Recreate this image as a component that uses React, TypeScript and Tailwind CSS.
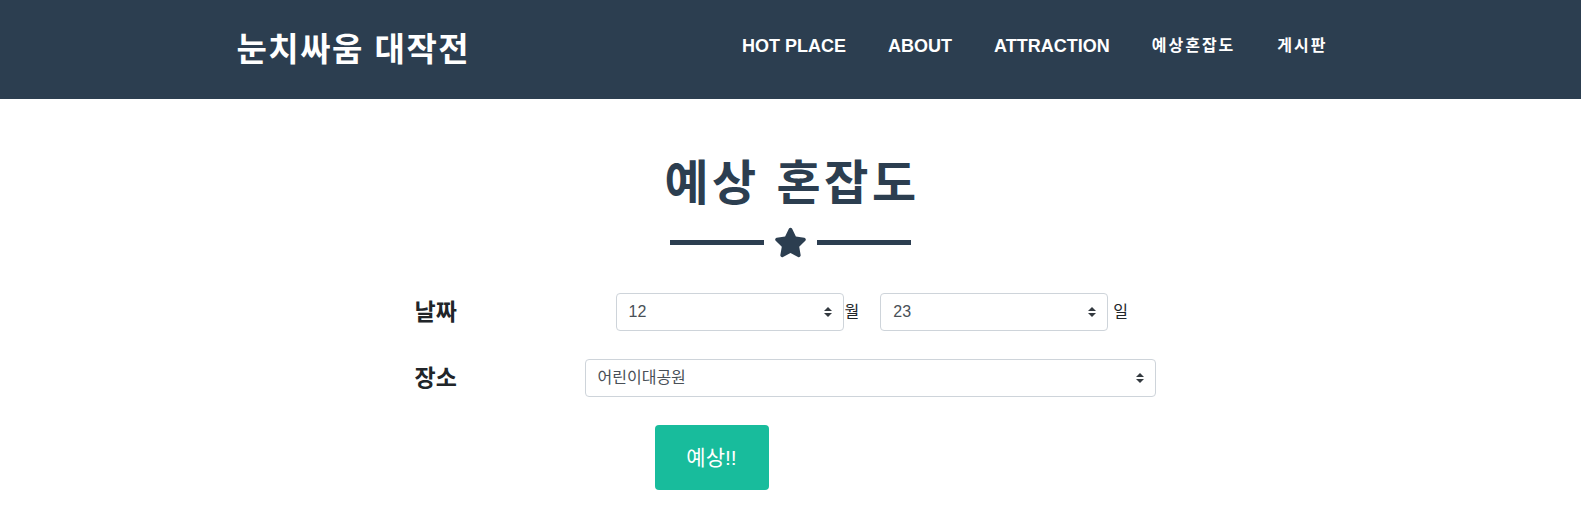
import React from "react";
import { FaStar } from "react-icons/fa";

const font = "font-['Liberation_Sans','Noto_Sans_CJK_KR',sans-serif]";

function SelectBox({ value, width }: { value: string; width: string }) {
  return (
    <div className={`relative ${width}`}>
      <select
        defaultValue={value}
        className={`appearance-none w-full h-[38px] border border-[#ced4da] rounded-[4px] pl-[12px] pr-[28px] text-[16px] text-[#495057] bg-white outline-none ${font}`}
      >
        <option>{value}</option>
      </select>
      <svg
        className="absolute right-[12px] top-1/2 -translate-y-1/2 pointer-events-none"
        width="8"
        height="10"
        viewBox="0 0 4 5"
      >
        <path fill="#343a40" d="M2 0L0 2h4zm0 5L0 3h4z" />
      </svg>
    </div>
  );
}

export default function App() {
  const navItems = ["HOT PLACE", "ABOUT", "ATTRACTION"];
  const navKo = ["예상혼잡도", "게시판"];
  return (
    <div className={`min-h-screen bg-white ${font}`}>
      <nav className="h-[99px] bg-[#2c3e50]">
        <div className="w-[1170px] mx-auto px-[15px] h-full flex items-center">
          <a className="pl-[16px] text-[33px] font-bold text-white leading-none tracking-[1.5px]">
            눈치싸움 대작전
          </a>
          <ul className="ml-auto mr-[15px] flex items-center -mt-[8px]">
            {navItems.map((t) => (
              <li key={t} className="px-[21px] text-[18px] font-bold text-white leading-none">
                {t}
              </li>
            ))}
            {navKo.map((t) => (
              <li
                key={t}
                className="px-[21px] text-[16px] font-bold text-white tracking-[2px] leading-none last:pr-[18px]"
              >
                {t}
              </li>
            ))}
          </ul>
        </div>
      </nav>

      <section className="pt-[61px]">
        <h2 className="text-center text-[48px] font-bold text-[#2c3e50] leading-none tracking-[3.5px] pl-[3px]">
          예상 혼잡도
        </h2>
        <div className="flex justify-center items-center mt-[19px] h-[31px]">
          <div className="w-[94px] h-[5px] bg-[#2c3e50]" />
          <FaStar className="mx-[10px] w-[33px] h-[31px] text-[#2c3e50]" />
          <div className="w-[94px] h-[5px] bg-[#2c3e50]" />
        </div>

        <div className="w-[752px] mx-auto mt-[35px]">
          <div className="flex items-center h-[38px]">
            <div className="w-[201px] text-[23px] font-bold text-[#212529]">날짜</div>
            <SelectBox value="12" width="w-[228px]" />
            <span className="ml-[1px] text-[16px] text-[#212529]">월</span>
            <div className="ml-[21px]">
              <SelectBox value="23" width="w-[228px]" />
            </div>
            <span className="ml-[5px] text-[16px] text-[#212529]">일</span>
          </div>

          <div className="flex items-center h-[38px] mt-[28px]">
            <div className="w-[170px] text-[23px] font-bold text-[#212529]">장소</div>
            <SelectBox value="어린이대공원" width="w-[571px]" />
          </div>

          <button className="mt-[28px] ml-[240px] w-[114px] h-[65px] rounded-[4px] bg-[#18bc9c] text-white text-[21px]">
            예상!!
          </button>
        </div>
      </section>
    </div>
  );
}
